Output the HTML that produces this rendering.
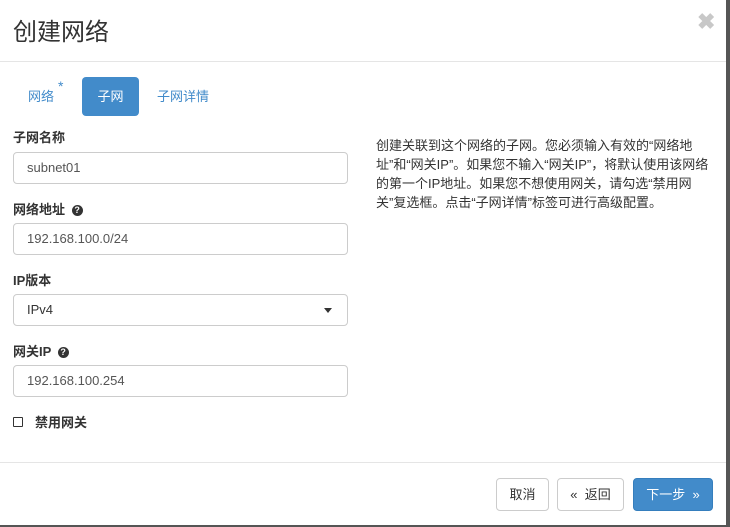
<!DOCTYPE html>
<html><head><meta charset="utf-8"><style>
*{box-sizing:border-box;margin:0;padding:0}
body{width:730px;height:527px;background:#fff;font-family:"Liberation Sans","Noto Sans CJK SC",sans-serif;position:relative;overflow:hidden}
.edge{position:absolute;left:726px;top:0;width:4px;height:527px;background:#555}
.edgeb{position:absolute;left:0;top:525px;width:730px;height:2px;background:#555}
.m{position:absolute;left:0;top:0;width:726px;height:525px;background:#fff;border-bottom-right-radius:4px}
.t{position:absolute;left:13px;top:12px;font-size:24px;color:#333}
.x{position:absolute;left:697px;top:9px;font-size:22px;color:#c8c8c8;font-weight:bold}
.hl{position:absolute;left:0;width:726px;height:1px;background:#e5e5e5}
.tab{position:absolute;top:77px;height:39px;line-height:39px;font-size:13px;color:#428bca}
.lab{position:absolute;left:13px;font-size:13px;font-weight:bold;color:#333}
.in{position:absolute;left:13px;width:335px;height:32px;border:1px solid #ccc;border-radius:4px;font-size:13px;color:#555;padding-left:13px;line-height:30px}
.q{display:inline-block;width:11px;height:11px;border-radius:50%;background:#333;color:#fff;font-size:9px;text-align:center;line-height:11px;vertical-align:1px;margin-left:3px}
.desc{position:absolute;left:376px;top:136px;width:340px;font-size:13px;line-height:19px;color:#333}
.b{position:absolute;top:478px;height:33px;border:1px solid #ccc;border-radius:4px;font-size:13px;color:#333;text-align:center;line-height:31px;background:#fff}
</style></head><body>
<div class="edge"></div><div class="edgeb"></div>
<div class="m">
<div class="t">创建网络</div>
<div class="x">✖</div>
<div class="hl" style="top:61px"></div>
<div class="tab" style="left:28px">网络<span style="position:absolute;left:30px;top:-10px;font-size:14px">*</span></div>
<div class="tab" style="left:82px;width:57px;background:#428bca;color:#fff;border-radius:4px;text-align:center">子网</div>
<div class="tab" style="left:157px">子网详情</div>
<div class="lab" style="top:127px">子网名称</div>
<div class="in" style="top:152px">subnet01</div>
<div class="lab" style="top:199px">网络地址 <span class="q">?</span></div>
<div class="in" style="top:223px">192.168.100.0/24</div>
<div class="lab" style="top:270px">IP版本</div>
<div class="in" style="top:294px;color:#333">IPv4<span style="position:absolute;right:15px;top:13px;border-left:4px solid transparent;border-right:4px solid transparent;border-top:5px solid #333"></span></div>
<div class="lab" style="top:341px">网关IP <span class="q">?</span></div>
<div class="in" style="top:365px">192.168.100.254</div>
<div style="position:absolute;left:13px;top:417px;width:10px;height:10px;border:1px solid #333;border-radius:1px"></div>
<div class="lab" style="left:35px;top:412px">禁用网关</div>
<div class="desc">创建关联到这个网络的子网。您必须输入有效的“网络地址”和“网关IP”。如果您不输入“网关IP”，将默认使用该网络的第一个IP地址。如果您不想使用网关，请勾选“禁用网关”复选框。点击“子网详情”标签可进行高级配置。</div>
<div class="hl" style="top:462px"></div>
<div class="b" style="left:496px;width:53px">取消</div>
<div class="b" style="left:557px;width:67px">«&nbsp; 返回</div>
<div class="b" style="left:633px;width:80px;background:#428bca;border-color:#357ebd;color:#fff">下一步 &nbsp;»</div>
</div>
</body></html>
